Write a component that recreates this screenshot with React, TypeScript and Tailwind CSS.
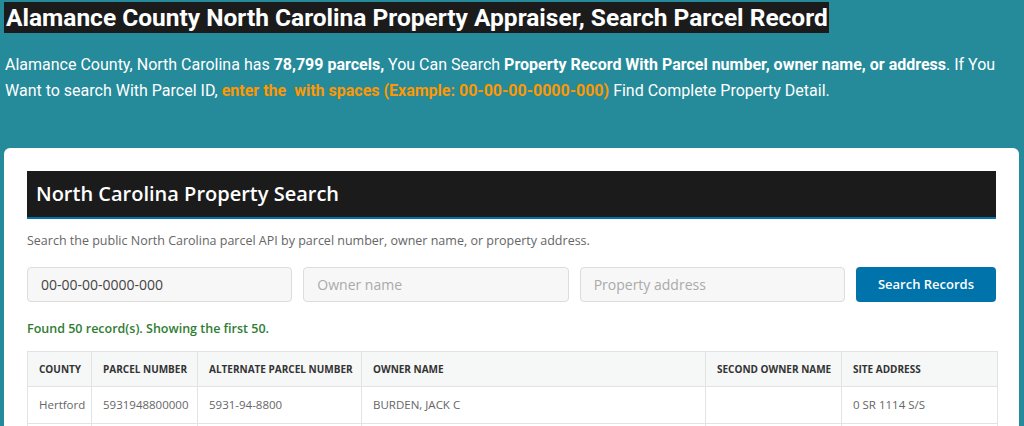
export default function App() {
  const cols = [
    { key: "county", label: "County", w: "w-[64px]" },
    { key: "parcel", label: "Parcel Number", w: "w-[106px]" },
    { key: "alt", label: "Alternate Parcel Number", w: "w-[164px]" },
    { key: "owner", label: "Owner Name", w: "w-[344px]" },
    { key: "second", label: "Second Owner Name", w: "w-[136px]" },
    { key: "site", label: "Site Address", w: "w-[156px]" },
  ];
  const rows = [
    {
      county: "Hertford",
      parcel: "5931948800000",
      alt: "5931-94-8800",
      owner: "BURDEN, JACK C",
      second: "",
      site: "0 SR 1114 S/S",
    },
  ];

  return (
    <div className="min-h-[426px] w-full overflow-hidden bg-[#258a9a] font-['Roboto',sans-serif]">
      <div className="px-1 pt-[2px]">
        <h1 className="inline-block bg-[#1b1b1b] pl-[2px] pr-px text-[24.5px] font-bold leading-[31px] text-white">
          Alamance County North Carolina Property Appraiser, Search Parcel Record
        </h1>
        <p className="mt-[19px] pl-px text-[16px] leading-[26px] text-white">
          Alamance County, North Carolina has <strong>78,799 parcels,</strong> You Can Search{" "}
          <strong>Property Record With Parcel number, owner name, or address</strong>. If You Want
          to search With Parcel ID,{" "}
          <strong className="text-[#ff9800]">enter the&nbsp; with spaces (Example: 00-00-00-0000-000)</strong>{" "}
          Find Complete Property Detail.
        </p>
      </div>

      <div className="mx-1 mt-[44px] w-[1015px] rounded-t-[6px] bg-white px-[23px] pt-[23px] font-['Open_Sans',sans-serif]">
        <div className="border-b-2 border-[#0073aa] bg-[#1b1b1b] px-[9px] py-[9px]">
          <h2 className="text-[20px] font-semibold leading-[28px] text-white">North Carolina Property Search</h2>
        </div>
        <p className="mt-[13px] text-[12.5px] leading-[18px] text-[#666]">
          Search the public North Carolina parcel API by parcel number, owner name, or property address.
        </p>

        <div className="mt-[17px] grid grid-cols-[1fr_1fr_1fr_140px] gap-[11px]">
          <input
            className="h-[35px] rounded-[4px] border border-[#dcdcdc] bg-[#f7f7f7] px-[13px] text-[14px] text-[#444] outline-none"
            defaultValue="00-00-00-0000-000"
          />
          <input
            className="h-[35px] rounded-[4px] border border-[#dcdcdc] bg-[#f7f7f7] px-[13px] text-[14px] text-[#444] outline-none placeholder:text-[#aaa]"
            placeholder="Owner name"
          />
          <input
            className="h-[35px] rounded-[4px] border border-[#dcdcdc] bg-[#f7f7f7] px-[13px] text-[14px] text-[#444] outline-none placeholder:text-[#aaa]"
            placeholder="Property address"
          />
          <button className="h-[35px] rounded-[4px] bg-[#0073aa] text-[13px] font-semibold text-white">
            Search Records
          </button>
        </div>

        <p className="mt-[18px] text-[12.5px] font-semibold leading-[18px] text-[#2e7d32]">
          Found 50 record(s). Showing the first 50.
        </p>

        <table className="mt-[13px] w-full table-fixed border-collapse text-left">
          <thead>
            <tr className="bg-[#f6f7f7]">
              {cols.map((c) => (
                <th
                  key={c.key}
                  className={`${c.w} h-[35px] whitespace-nowrap border border-[#e3e3e3] px-[11px] text-[10px] font-bold uppercase text-[#333]`}
                >
                  {c.label}
                </th>
              ))}
            </tr>
          </thead>
          <tbody>
            {rows.map((r) => (
              <tr key={r.parcel}>
                {cols.map((c) => (
                  <td
                    key={c.key}
                    className="h-[37px] whitespace-nowrap border border-[#e3e3e3] px-[11px] text-[11.5px] text-[#666]"
                  >
                    {r[c.key as keyof typeof r]}
                  </td>
                ))}
              </tr>
            ))}
            <tr>
              {cols.map((c) => (
                <td key={c.key} className="h-[37px] border border-[#e3e3e3] px-[11px]" />
              ))}
            </tr>
          </tbody>
        </table>
      </div>
    </div>
  );
}
